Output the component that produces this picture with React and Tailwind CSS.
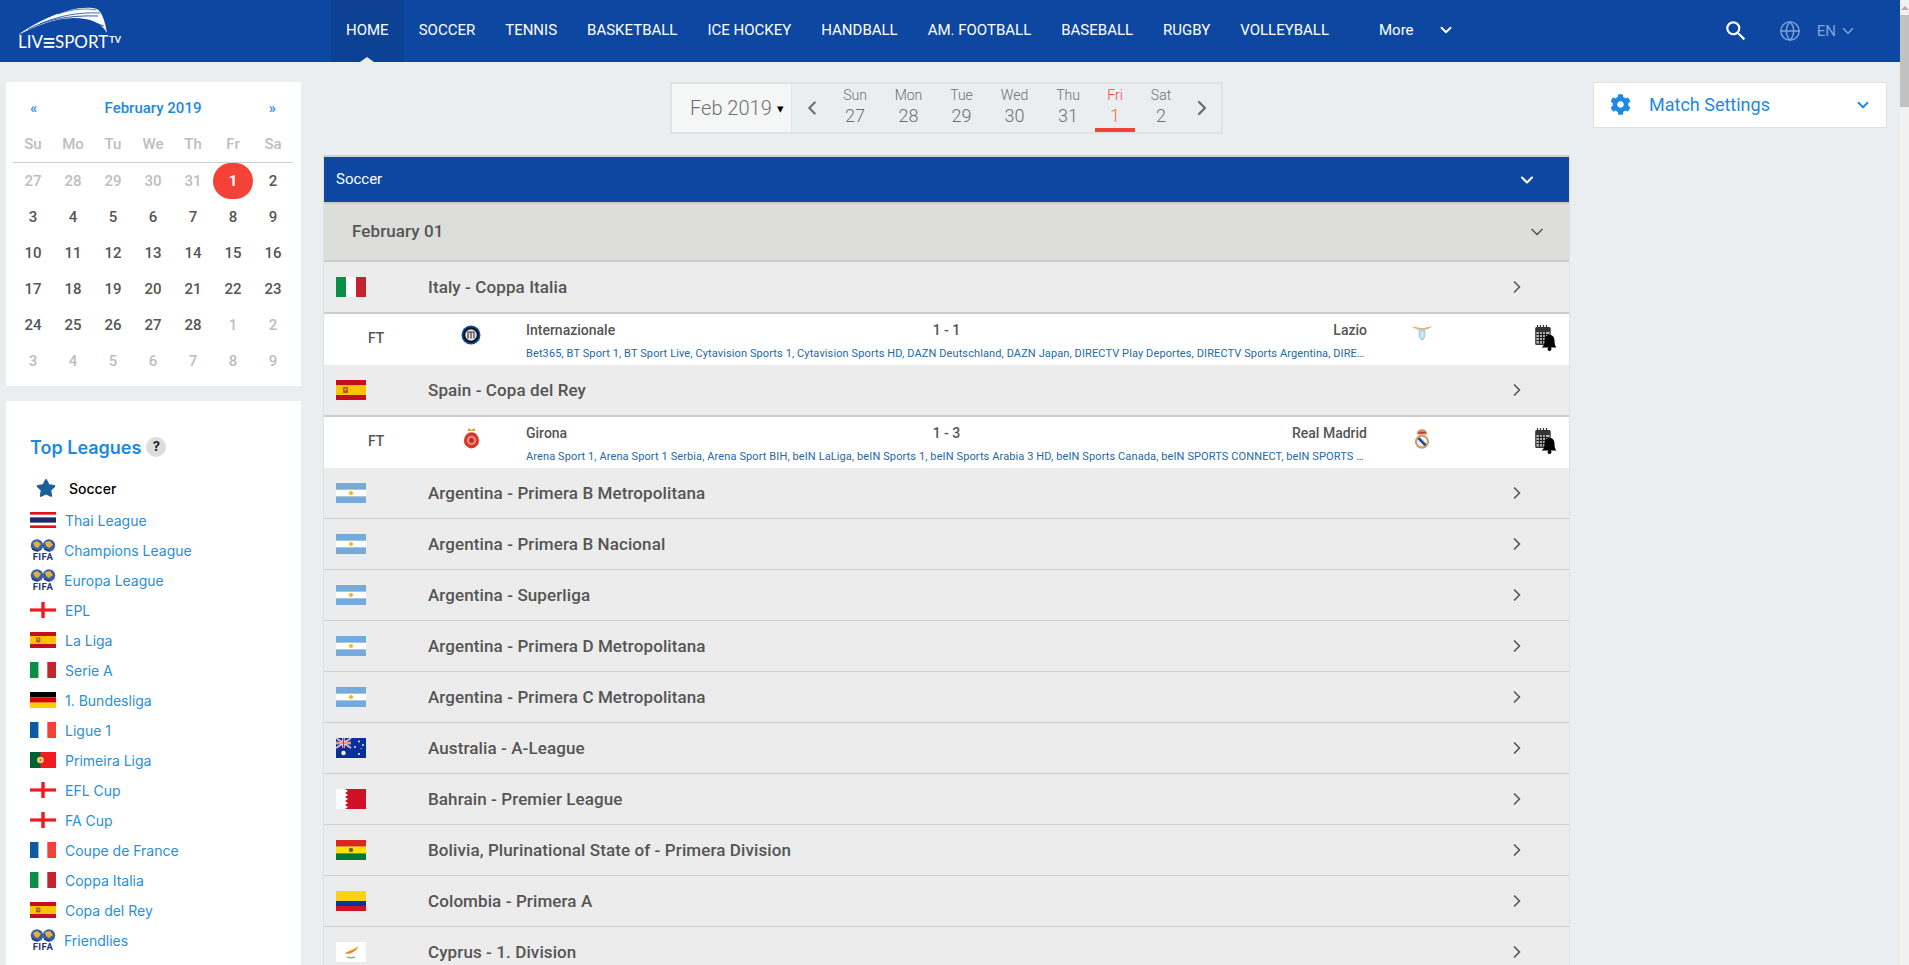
import React from 'react';
import { ChevronDown, ChevronRight, ChevronLeft, Globe } from 'lucide-react';
import { FaCog, FaStar } from 'react-icons/fa';
import { MdSearch } from 'react-icons/md';

const Italy = () => (<svg viewBox="0 0 30 20" className="w-full h-full block" preserveAspectRatio="none"><rect width="10" height="20" fill="#0b8f47"/><rect x="10" width="10" height="20" fill="#fff"/><rect x="20" width="10" height="20" fill="#c4242f"/></svg>);
const Spain = () => (<svg viewBox="0 0 30 20" className="w-full h-full block" preserveAspectRatio="none"><rect width="30" height="20" fill="#c60f1d"/><rect y="5" width="30" height="10" fill="#fcc400"/><rect x="7" y="7" width="5" height="6" rx="1" fill="#b5552a"/><rect x="8.5" y="8.5" width="2" height="2" fill="#e9a23b"/></svg>);
const Argentina = () => (<svg viewBox="0 0 30 20" className="w-full h-full block" preserveAspectRatio="none"><rect width="30" height="20" fill="#75aadb"/><rect y="6.67" width="30" height="6.67" fill="#fff"/><circle cx="15" cy="10" r="2" fill="#f6b40e"/></svg>);
const Australia = () => (<svg viewBox="0 0 30 20" className="w-full h-full block" preserveAspectRatio="none"><rect width="30" height="20" fill="#0a2f9b"/><rect width="15" height="10" fill="#0a2f9b"/><path d="M0 0L15 10M15 0L0 10" stroke="#fff" strokeWidth="1.6"/><path d="M0 0L15 10M15 0L0 10" stroke="#d0342c" strokeWidth=".6"/><path d="M7.5 0V10M0 5H15" stroke="#fff" strokeWidth="2.4"/><path d="M7.5 0V10M0 5H15" stroke="#d0342c" strokeWidth="1.2"/><circle cx="7.5" cy="15" r="2.2" fill="#fff"/><circle cx="23" cy="3.5" r=".9" fill="#fff"/><circle cx="27" cy="7" r=".9" fill="#fff"/><circle cx="19" cy="9" r=".9" fill="#fff"/><circle cx="25" cy="10.5" r=".5" fill="#fff"/><circle cx="23" cy="16" r="1" fill="#fff"/></svg>);
const Bahrain = () => (<svg viewBox="0 0 30 20" className="w-full h-full block" preserveAspectRatio="none"><rect width="30" height="20" fill="#ce1126"/><path d="M0 0H9L12 2L9 4L12 6L9 8L12 10L9 12L12 14L9 16L12 18L9 20H0Z" fill="#fff"/></svg>);
const Bolivia = () => (<svg viewBox="0 0 30 20" className="w-full h-full block" preserveAspectRatio="none"><rect width="30" height="6.67" fill="#d52b1e"/><rect y="6.67" width="30" height="6.67" fill="#f9e300"/><rect y="13.33" width="30" height="6.67" fill="#007934"/><circle cx="15" cy="10" r="2.2" fill="#7a5a3a"/></svg>);
const Colombia = () => (<svg viewBox="0 0 30 20" className="w-full h-full block" preserveAspectRatio="none"><rect width="30" height="10" fill="#fcd116"/><rect y="10" width="30" height="5" fill="#003893"/><rect y="15" width="30" height="5" fill="#ce1126"/></svg>);
const Cyprus = () => (<svg viewBox="0 0 30 20" className="w-full h-full block" preserveAspectRatio="none"><rect width="30" height="20" fill="#fff"/><path d="M9 11C12 10 15 8 18 7L23 4L20 8C18 10 16 11 14 11.5C12 12 10 12 9 11Z" fill="#e88a1a"/><path d="M11 15Q15 17 19 15" stroke="#6a8a5a" strokeWidth="1" fill="none"/></svg>);
const Thai = () => (<svg viewBox="0 0 30 20" className="w-full h-full block" preserveAspectRatio="none"><rect width="30" height="20" fill="#e3111b"/><rect y="3.3" width="30" height="13.4" fill="#fff"/><rect y="6.7" width="30" height="6.6" fill="#1d2a6e"/></svg>);
const England = () => (<svg viewBox="0 0 30 20" className="w-full h-full block" preserveAspectRatio="none"><rect width="30" height="20" fill="#fff"/><rect x="13" width="4" height="20" fill="#ee1c25"/><rect y="8" width="30" height="4" fill="#ee1c25"/></svg>);
const Germany = () => (<svg viewBox="0 0 30 20" className="w-full h-full block" preserveAspectRatio="none"><rect width="30" height="6.67" fill="#000"/><rect y="6.67" width="30" height="6.67" fill="#dd0000"/><rect y="13.33" width="30" height="6.67" fill="#ffce00"/></svg>);
const France = () => (<svg viewBox="0 0 30 20" className="w-full h-full block" preserveAspectRatio="none"><rect width="10" height="20" fill="#0a5aa5"/><rect x="10" width="10" height="20" fill="#fff"/><rect x="20" width="10" height="20" fill="#f44336"/></svg>);
const Portugal = () => (<svg viewBox="0 0 30 20" className="w-full h-full block" preserveAspectRatio="none"><rect width="30" height="20" fill="#ee1c25"/><rect width="12" height="20" fill="#006233"/><circle cx="12" cy="10" r="4" fill="#f0c23c"/><circle cx="12" cy="10" r="2.4" fill="#e8e8e8"/><circle cx="12" cy="10" r="1.1" fill="#c8202c"/></svg>);

const Fifa = () => (
  <div className="w-[26px] h-[23px] flex flex-col items-center">
    <svg viewBox="0 0 26 13" className="w-[26px] h-[13px] block">
      <circle cx="7" cy="6.5" r="6.2" fill="#3a5fa8"/>
      <circle cx="19" cy="6.5" r="6.2" fill="#3a5fa8"/>
      <path d="M3 4L7 2L11 5L8 9L5 8Z" fill="#e3b23c"/>
      <path d="M15 3L20 2L23 6L19 9L16 7Z" fill="#e3b23c"/>
      <path d="M2 10L8 12M14 10L20 12" stroke="#1d2f66" strokeWidth="1.2"/>
    </svg>
    <span className="text-[9.5px] leading-[10px] font-bold text-[#1c3a6e] font-[family-name:Roboto,sans-serif] tracking-[0.5px]">FIFA</span>
  </div>
);

const Logo = () => (
  <div className="w-[331px] shrink-0 flex flex-col pl-[18px] pt-[7px]">
    <svg viewBox="0 0 92 28" className="w-[92px] h-[28px] block" fill="#fff">
      <path d="M0 28C12 19 32 8 52 3C62 .5 73 0 79 2C84 5 87 14 89 26C84 16 72 11 56 11C36 11 16 20 0 28Z"/>
      <path d="M10 22.500C28 13 50 8 80 9" stroke="#0d47a1" strokeWidth=".9" fill="none"/>
      <path d="M22 17C40 9 60 5 82 6" stroke="#0d47a1" strokeWidth=".8" fill="none"/>
      <path d="M20 22C38 14 64 11 86 19" stroke="#0d47a1" strokeWidth=".9" fill="none"/>
      <path d="M40 7C54 2 68 1 78 3" stroke="#0d47a1" strokeWidth=".7" fill="none"/>
    </svg>
    <div className="flex items-center h-[17px] text-white font-[family-name:Lato,sans-serif] leading-none -mt-[2px]">
      <span className="text-[17px]">LIV</span>
      <span className="text-[24px] leading-[17px] -mx-[1px]">≡</span>
      <span className="text-[17px]">SPORT</span>
      <span className="text-[9px] font-bold ml-[1px] -mt-[5px]">TV</span>
    </div>
  </div>
);

const NAV = ['SOCCER', 'TENNIS', 'BASKETBALL', 'ICE HOCKEY', 'HANDBALL', 'AM. FOOTBALL', 'BASEBALL', 'RUGBY', 'VOLLEYBALL'];

const Header = () => (
  <header className="h-[62px] bg-[#0e47a1] flex text-white shrink-0">
    <Logo />
    <nav className="flex h-full text-[15px] font-[450]">
      <a className="relative h-full px-[15px] flex items-center bg-[#0c4193] pb-[2px]">
        HOME
        <span className="absolute bottom-0 left-1/2 -ml-[7px] w-0 h-0 border-x-[7px] border-x-transparent border-b-[5px] border-b-[#ebeef1]" />
      </a>
      {NAV.map((n) => (
        <a key={n} className="h-full px-[15px] flex items-center pb-[2px]">{n}</a>
      ))}
      <a className="h-full ml-[20px] pl-[15px] flex items-center pb-[2px]">More<ChevronDown size={18} strokeWidth={2.5} className="ml-[23px]" /></a>
    </nav>
    <div className="ml-auto flex items-center pr-[43px]">
      <MdSearch size={26} className="mr-[30px]" />
      <Globe size={22} strokeWidth={1.5} className="text-[#7fa3d6] mr-[16px]" />
      <span className="text-[15px] text-[#7fa3d6]">EN</span>
      <ChevronDown size={18} strokeWidth={2} className="text-[#7fa3d6] ml-[3px]" />
    </div>
  </header>
);

const WEEK = ['Su', 'Mo', 'Tu', 'We', 'Th', 'Fr', 'Sa'];
const CAL = [
  [[27,0],[28,0],[29,0],[30,0],[31,0],[1,2],[2,1]],
  [[3,1],[4,1],[5,1],[6,1],[7,1],[8,1],[9,1]],
  [[10,1],[11,1],[12,1],[13,1],[14,1],[15,1],[16,1]],
  [[17,1],[18,1],[19,1],[20,1],[21,1],[22,1],[23,1]],
  [[24,1],[25,1],[26,1],[27,1],[28,1],[1,0],[2,0]],
  [[3,0],[4,0],[5,0],[6,0],[7,0],[8,0],[9,0]],
];

const Calendar = () => (
  <div className="h-[304px] bg-white rounded-[2px] px-[7px] pt-[8px] shrink-0">
    <div className="h-[36px] flex items-center justify-between pl-[17px] pr-[18px] text-[#1e88e5] font-medium text-[15px]">
      <span>«</span><span>February 2019</span><span>»</span>
    </div>
    <div className="grid grid-cols-7 w-[280px] h-[37px] border-b border-[#cfcfcf] text-[15px] font-medium text-[#bdbdbd] text-center items-center">
      {WEEK.map((d) => <span key={d}>{d}</span>)}
    </div>
    <div className="grid grid-cols-7 w-[280px] text-[15px] font-medium text-center">
      {CAL.flat().map(([d, k], i) => (
        <span key={i} className={k === 2 ? 'h-[36px] leading-[36px] rounded-full bg-[#f44336] text-white font-bold' : k === 1 ? 'h-[36px] leading-[36px] text-[#555]' : 'h-[36px] leading-[36px] text-[#bdbdbd]'}>{d}</span>
      ))}
    </div>
  </div>
);

const LEAGUES = [
  [Thai, 'Thai League', 0], [Fifa, 'Champions League', 1], [Fifa, 'Europa League', 1], [England, 'EPL', 0], [Spain, 'La Liga', 0],
  [Italy, 'Serie A', 0], [Germany, '1. Bundesliga', 0], [France, 'Ligue 1', 0], [Portugal, 'Primeira Liga', 0], [England, 'EFL Cup', 0],
  [England, 'FA Cup', 0], [France, 'Coupe de France', 0], [Italy, 'Coppa Italia', 0], [Spain, 'Copa del Rey', 0], [Fifa, 'Friendlies', 1],
];

const TopLeagues = () => (
  <div className="mt-[15px] flex-1 bg-white rounded-t-[2px] pl-[24px] pt-[32px] font-[family-name:Inter,sans-serif]">
    <div className="h-[28px] flex items-center">
      <span className="text-[18px] font-semibold text-[#1e88e5]">Top Leagues</span>
      <span className="ml-[5px] w-[20px] h-[20px] rounded-full bg-[#dddedc] text-[#222] text-[13px] font-bold flex items-center justify-center">?</span>
    </div>
    <div className="h-[30px] mt-[12px] flex items-center">
      <FaStar size={20} className="ml-[6px] text-[#1c5f99]" />
      <span className="ml-[13px] text-[14px] font-medium text-black">Soccer</span>
    </div>
    <div className="mt-[2px]">
      {LEAGUES.map(([F, n, fifa]) => (
        <div key={n} className="h-[30px] flex items-center">
          <span className={fifa ? 'w-[26px] h-[23px] shrink-0' : 'w-[26px] h-[16px] shrink-0'}><F /></span>
          <span className={fifa ? 'ml-[8px] text-[14px] text-[#2a8fd8]' : 'ml-[9px] text-[14px] text-[#2a8fd8]'}>{n}</span>
        </div>
      ))}
    </div>
  </div>
);

const DAYS = [['Sun','27','w-[54px]'],['Mon','28','w-[53px]'],['Tue','29','w-[53px]'],['Wed','30','w-[53px]'],['Thu','31','w-[54px]']];

const DateBar = () => (
  <div className="h-[52px] flex justify-center">
    <div className="w-[553px] h-[52px] border-2 border-[#e0e3e5] flex items-stretch text-[#6f6f6f]">
      <div className="w-[120px] bg-[#f5f6f6] border-r border-[#e0e3e5] flex items-center pl-[18px] text-[20px] font-light">
        Feb 2019<span className="ml-[5px] text-black text-[13px] leading-none">▾</span>
      </div>
      <div className="w-[36px] flex items-center justify-center pl-[4px]"><ChevronLeft size={22} strokeWidth={2.4} /></div>
      {DAYS.map(([d, n, w]) => (
        <div key={d} className={`${w} flex flex-col items-center pt-[1px]`}>
          <span className="text-[14px] leading-[20px] font-light">{d}</span>
          <span className="text-[18px] leading-[22px] font-light">{n}</span>
        </div>
      ))}
      <div className="w-[40px] h-full flex flex-col items-center pt-[1px] border-b-[4px] border-[#f44336] text-[#f44336]">
        <span className="text-[14px] leading-[20px] font-light">Fri</span>
        <span className="text-[18px] leading-[22px] font-light text-[#e8762c]">1</span>
      </div>
      <div className="w-[52px] flex flex-col items-center pt-[1px]">
        <span className="text-[14px] leading-[20px] font-light">Sat</span>
        <span className="text-[18px] leading-[22px] font-light">2</span>
      </div>
      <div className="flex-1 flex items-center justify-center"><ChevronRight size={24} strokeWidth={2.4} className="-ml-[4px]" /></div>
    </div>
  </div>
);

const League = ({ F, name, thick }) => (
  <div className={thick ? 'h-[52px] bg-[#ececec] border-b-2 border-[#cccccc] flex items-center' : 'h-[51px] bg-[#ececec] border-b border-[#cfcfcf] flex items-center'}>
    <span className="ml-[12px] w-[30px] h-[20px] shrink-0"><F /></span>
    <span className="ml-[62px] mt-[2px] text-[17px] tracking-[0.1px] font-[550] text-[#555]">{name}</span>
    <ChevronRight size={20} strokeWidth={2} className="ml-auto mr-[42px] text-[#555]" />
  </div>
);

const Inter = () => (<svg viewBox="0 0 20 20" className="w-[20px] h-[20px] block"><circle cx="10" cy="10" r="9.500" fill="#0b4aa0"/><circle cx="10" cy="10" r="7.800" fill="#111"/><circle cx="10" cy="10" r="5.800" fill="#dfe4ea"/><path d="M7 6.500V13.500M10 6.500V13.500M13 6.500V13.500M7 7H13" stroke="#333" strokeWidth="1.100" fill="none"/></svg>);
const Lazio = () => (<svg viewBox="0 0 24 18" className="w-[20px] h-[16px] block"><path d="M0 1L10 3H14L24 1C22 4 18 5 15 5H9C6 5 2 4 0 1Z" fill="#d9b77e"/><path d="M8 5H16V12C16 15 14 17 12 18C10 17 8 15 8 12Z" fill="#9fd0ee"/><path d="M11 7V15M13 7V15" stroke="#fff" strokeWidth="1"/></svg>);
const Girona = () => (<svg viewBox="0 0 18 22" className="w-[17px] h-[21px] block"><path d="M5 3L6 0L9 2L12 0L13 3Z" fill="#c9a24a"/><ellipse cx="9" cy="13" rx="8" ry="8.500" fill="#d8352f"/><circle cx="9" cy="13" r="5" fill="#e58a70"/><circle cx="9" cy="13" r="2.500" fill="#c8202c"/></svg>);
const Madrid = () => (<svg viewBox="0 0 18 22" className="w-[16px] h-[20px] block mt-[1px]"><path d="M3 6C3 2 6 0 9 0C12 0 15 2 15 6Z" fill="#c99a5b"/><rect x="5" y="3" width="8" height="2" fill="#c03a3a"/><circle cx="9" cy="14" r="8" fill="#c9a26a"/><circle cx="9" cy="14" r="5.500" fill="#f3f3f3"/><path d="M5 10L13 18" stroke="#264a8c" strokeWidth="3"/></svg>);

const Bell = () => (
  <svg viewBox="0 0 22 26" className="w-[23px] h-[26px] block">
    <rect x="0.700" y="2" width="15.500" height="18" rx="1.500" fill="#333" />
    <rect x="2" y="7" width="13" height="11.500" fill="#bbb"/>
    <path d="M2 9.500H15M2 12.500H15M2 15.500H15M5 7V18.500M8 7V18.500M11 7V18.500" stroke="#222" strokeWidth="1.200"/>
    <path d="M3 0V3M6 0V3M9 0V3M12 0V3" stroke="#333" strokeWidth="1.200"/>
    <path d="M7 22.500C9.500 21 10 19 10 15.500C10 12 12 10 15 10C18 10 20 12 20 15.500C20 19 20.500 21 22 22.500Z" fill="#000"/>
    <circle cx="15" cy="24" r="2" fill="#000"/>
  </svg>
);

const Match = ({ Home, Away, home, away, score, channels }) => (
  <div className="h-[51px] bg-white flex">
    <div className="w-[202px] shrink-0 flex pl-[44px]">
      <span className="w-[93px] pt-[16px] text-[14px] leading-[16px] font-medium text-[#555]">FT</span>
      <span className="w-[20px] pt-[11px] flex justify-center"><Home /></span>
    </div>
    <div className="w-[841px] shrink-0">
      <div className="grid grid-cols-3 h-[33px] items-center text-[14px] font-medium text-[#555]">
        <span>{home}</span><span className="text-center">{score}</span><span className="text-right">{away}</span>
      </div>
      <div className="truncate text-[11px] tracking-[0.11px] leading-[14px] text-[#2468a8]">{channels}</div>
    </div>
    <div className="w-[110px] shrink-0 flex justify-center pt-[11px]"><Away /></div>
    <div className="ml-[57px] pt-[11px]"><Bell /></div>
  </div>
);

const MainList = () => (
  <div className="mt-[21px] flex-1 border-x border-[#dfe2e4] border-t-2 border-t-[#cfd1d2]">
    <div className="h-[47px] bg-[#0e47a1] border-b-2 border-[#c9cbcc] flex items-center text-white text-[15px] pl-[12px]">
      Soccer
      <ChevronDown size={20} strokeWidth={2.5} className="ml-auto mr-[32px]" />
    </div>
    <div className="h-[58px] bg-[#dddedc] border-b-2 border-[#cccccc] flex items-center pl-[28px] text-[17px] tracking-[0.1px] font-[550] text-[#555]">
      February 01
      <ChevronDown size={20} strokeWidth={2} className="ml-auto mr-[22px]" />
    </div>
    <League F={Italy} name="Italy - Coppa Italia" thick />
    <Match Home={Inter} Away={Lazio} home="Internazionale" away="Lazio" score="1 - 1"
      channels="Bet365, BT Sport 1, BT Sport Live, Cytavision Sports 1, Cytavision Sports HD, DAZN Deutschland, DAZN Japan, DIRECTV Play Deportes, DIRECTV Sports Argentina, DIRECTV Sports Colombia, DIRECTV Sports Chile" />
    <League F={Spain} name="Spain - Copa del Rey" thick />
    <Match Home={Girona} Away={Madrid} home="Girona" away="Real Madrid" score="1 - 3"
      channels="Arena Sport 1, Arena Sport 1 Serbia, Arena Sport BIH, beIN LaLiga, beIN Sports 1, beIN Sports Arabia 3 HD, beIN Sports Canada, beIN SPORTS CONNECT, beIN SPORTS HD, beIN Sports MENA" />
    <League F={Argentina} name="Argentina - Primera B Metropolitana" />
    <League F={Argentina} name="Argentina - Primera B Nacional" />
    <League F={Argentina} name="Argentina - Superliga" />
    <League F={Argentina} name="Argentina - Primera D Metropolitana" />
    <League F={Argentina} name="Argentina - Primera C Metropolitana" />
    <League F={Australia} name="Australia - A-League" />
    <League F={Bahrain} name="Bahrain - Premier League" />
    <League F={Bolivia} name="Bolivia, Plurinational State of - Primera Division" />
    <League F={Colombia} name="Colombia - Primera A" />
    <League F={Cyprus} name="Cyprus - 1. Division" />
  </div>
);

const Scrollbar = () => (
  <div className="w-[9px] shrink-0 bg-[#f1f1f1] flex flex-col items-center">
    <span className="mt-[6px] w-0 h-0 border-x-[4px] border-x-transparent border-b-[4px] border-b-[#c0a8a8]" />
    <span className="mt-[5px] w-[9px] h-[92px] bg-[#c1c1c1]" />
  </div>
);

export default function App() {
  return (
    <div className="h-screen overflow-hidden flex bg-[#ebeef1] font-[family-name:Roboto,sans-serif]">
      <div className="flex-1 min-w-0 flex flex-col">
        <Header />
        <div className="flex-1 min-h-0 flex pt-[20px]">
          <aside className="ml-[6px] w-[295px] shrink-0 flex flex-col">
            <Calendar />
            <TopLeagues />
          </aside>
          <main className="ml-[22px] w-[1247px] shrink-0 flex flex-col">
            <DateBar />
            <MainList />
          </main>
          <div className="ml-[23px] w-[294px] h-[46px] bg-white border border-[#dfe2e4] flex items-center pl-[16px] pb-[1px] text-[#1e88e5] shrink-0">
            <FaCog size={21} />
            <span className="ml-[18px] text-[18px]">Match Settings</span>
            <ChevronDown size={18} strokeWidth={2.5} className="ml-auto mr-[14px]" />
          </div>
        </div>
      </div>
      <Scrollbar />
    </div>
  );
}
